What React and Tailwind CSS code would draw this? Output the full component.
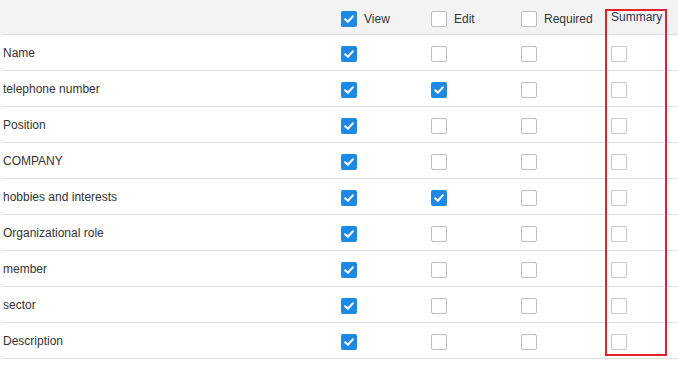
import React from "react";

const rows = [
  { label: "Name", view: true, edit: false },
  { label: "telephone number", view: true, edit: true },
  { label: "Position", view: true, edit: false },
  { label: "COMPANY", view: true, edit: false },
  { label: "hobbies and interests", view: true, edit: true },
  { label: "Organizational role", view: true, edit: false },
  { label: "member", view: true, edit: false },
  { label: "sector", view: true, edit: false },
  { label: "Description", view: true, edit: false },
];

function Box({ checked, light }) {
  if (checked) {
    return (
      <span className="flex h-[16px] w-[16px] shrink-0 items-center justify-center rounded-[2px] bg-[#1e88e5]">
        <svg width="16" height="16" viewBox="0 0 16 16">
          <path d="M4.2 8.3 L6.9 10.8 L11.8 5.4" fill="none" stroke="#fff" strokeWidth="2.1" strokeLinecap="round" strokeLinejoin="round" />
        </svg>
      </span>
    );
  }
  return (
    <span
      className={
        "block h-[16px] w-[16px] shrink-0 rounded-[2px] border bg-white " +
        (light ? "border-[#c8c8c8]" : "border-[#bdbdbd]")
      }
    />
  );
}

export default function App() {
  return (
    <div className="relative w-[678px] bg-white font-['Liberation_Sans',Arial,sans-serif] text-[12px] text-[#333]">
      <div className="bg-[#f3f3f3]">
        <div className="ml-[2px] grid h-[35px] grid-cols-[331px_90px_90px_90px_1fr] border-b border-[#e0e0e0]">
          <div />
          <div className="flex items-center gap-[7px] pl-2 pt-[3px]">
            <Box checked />
            <span className="leading-none">View</span>
          </div>
          <div className="flex items-center gap-[7px] pl-2 pt-[3px]">
            <Box />
            <span className="leading-none">Edit</span>
          </div>
          <div className="flex items-center gap-[7px] pl-2 pt-[3px]">
            <Box />
            <span className="leading-none">Required</span>
          </div>
          <div className="pl-2 pt-[11px] leading-none text-[#30305a]">Summary</div>
        </div>
      </div>
      {rows.map((r) => (
        <div
          key={r.label}
          className="ml-[2px] grid h-[36px] grid-cols-[331px_90px_90px_90px_1fr] border-b border-[#e0e0e0]"
        >
          <div className="flex items-center pl-[1px]">{r.label}</div>
          <div className="flex items-center pl-2 pt-[3px]">
            <Box checked={r.view} />
          </div>
          <div className="flex items-center pl-2 pt-[3px]">
            <Box checked={r.edit} />
          </div>
          <div className="flex items-center pl-2 pt-[3px]">
            <Box />
          </div>
          <div className="flex items-center pl-2 pt-[3px]">
            <Box light />
          </div>
        </div>
      ))}
      <div className="pointer-events-none absolute left-[605px] top-[9px] h-[347px] w-[62px] border-2 border-[#e5202a]" />
    </div>
  );
}
